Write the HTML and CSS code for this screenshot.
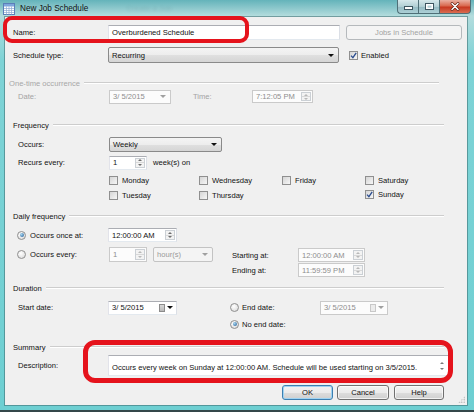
FILE: index.html
```html
<!DOCTYPE html>
<html>
<head>
<meta charset="utf-8">
<title>New Job Schedule</title>
<link rel="stylesheet" href="styles.css">
</head>
<body>
<div class="window">
  <div class="titlebar">
    <svg class="app-icon" viewBox="0 0 12 12" width="12" height="12">
      <rect x="0.5" y="0.5" width="11" height="11" fill="#fff" stroke="#5b7fb8"/>
      <rect x="1" y="1" width="10" height="2.5" fill="#7ea6dc"/>
      <path d="M1 5.5h10M1 7.5h10M1 9.5h10M3.5 3.5v8M6 3.5v8M8.5 3.5v8" stroke="#8eaad3" stroke-width="0.7"/>
    </svg>
    <span class="title">New Job Schedule</span>
    <span class="ghost">Create a Job</span>
    <div class="controls">
      <span class="wbtn min"><i></i></span>
      <span class="wbtn max"><i></i></span>
      <span class="wbtn close">
        <svg viewBox="0 0 10 9" width="10" height="9">
          <path d="M2 1.5L8 7.5M8 1.5L2 7.5" stroke="#5a1a10" stroke-width="2.6" stroke-linecap="round"/>
          <path d="M2 1.5L8 7.5M8 1.5L2 7.5" stroke="#fff" stroke-width="1.5" stroke-linecap="round"/>
        </svg>
      </span>
    </div>
  </div>

  <div class="client">
    <div class="row r-name">
      <span class="lbl lbl-top">Name:</span>
      <span class="tb w-name">Overburdened Schedule</span>
      <span class="btn btn-dis w-jobs">Jobs in Schedule</span>
    </div>
    <div class="row r-type">
      <span class="lbl lbl-top">Schedule type:</span>
      <span class="combo w-type">Recurring<i class="arrow"></i></span>
      <span class="chk ml-enabled"><svg viewBox="0 0 7 7"><path d="M1 3.6L2.9 5.6L6.2 0.8" fill="none" stroke="#2b4d8f" stroke-width="1.3"/></svg></span>
      <span class="chk-lbl">Enabled</span>
    </div>

    <div class="gh gh-onetime"><span>One-time occurrence</span><i></i></div>
    <div class="row r-date sub">
      <span class="lbl lbl-sub dis">Date:</span>
      <span class="tb tb-dis w-date">3/&nbsp;5/2015<i class="arrow dis"></i></span>
      <span class="lbl dis lbl-time">Time:</span>
      <span class="tb tb-dis w-time">7:12:05 PM<span class="spin dis"><i class="up"></i><i class="dn"></i></span></span>
    </div>

    <div class="gh gh-freq"><span>Frequency</span><i></i></div>
    <div class="row r-occurs sub">
      <span class="lbl lbl-sub">Occurs:</span>
      <span class="combo w-weekly">Weekly<i class="arrow"></i></span>
    </div>
    <div class="row r-recurs sub">
      <span class="lbl lbl-sub">Recurs every:</span>
      <span class="tb w-spin">1<span class="spin"><i class="up"></i><i class="dn"></i></span></span>
      <span class="weeks">week(s) on</span>
    </div>
    <div class="days">
      <span class="day"><span class="chk"></span>Monday</span>
      <span class="day"><span class="chk"></span>Wednesday</span>
      <span class="day"><span class="chk"></span>Friday</span>
      <span class="day"><span class="chk"></span>Saturday</span>
      <span class="day"><span class="chk"></span>Tuesday</span>
      <span class="day"><span class="chk"></span>Thursday</span>
      <span class="day"></span>
      <span class="day day-sun"><span class="chk"><svg viewBox="0 0 7 7"><path d="M1 3.6L2.9 5.6L6.2 0.8" fill="none" stroke="#2b4d8f" stroke-width="1.3"/></svg></span>Sunday</span>
    </div>

    <div class="gh gh-daily"><span>Daily frequency</span><i></i></div>
    <div class="daily">
      <div class="daily-left">
        <div class="row r-once">
          <span class="radio on"></span><span class="rlbl">Occurs once at:</span>
          <span class="tb w-t1">12:00:00 AM<span class="spin"><i class="up"></i><i class="dn"></i></span></span>
        </div>
        <div class="row r-every">
          <span class="radio"></span><span class="rlbl">Occurs every:</span>
          <span class="tb tb-dis w-spin2">1<span class="spin dis"><i class="up"></i><i class="dn"></i></span></span>
          <span class="combo combo-dis w-hours">hour(s)<i class="arrow dis"></i></span>
        </div>
      </div>
      <div class="daily-right">
        <div class="row r-start">
          <span class="lbl lbl-se">Starting at:</span>
          <span class="tb tb-dis w-t2">12:00:00 AM<span class="spin dis"><i class="up"></i><i class="dn"></i></span></span>
        </div>
        <div class="row r-end">
          <span class="lbl lbl-se">Ending at:</span>
          <span class="tb tb-dis w-t2">11:59:59 PM<span class="spin dis"><i class="up"></i><i class="dn"></i></span></span>
        </div>
      </div>
    </div>

    <div class="gh gh-dur"><span>Duration</span><i></i></div>
    <div class="dur">
      <div class="dur-left">
        <div class="row r-sdate">
          <span class="lbl lbl-sd">Start date:</span>
          <span class="tb w-sdate">3/&nbsp;5/2015<span class="cal"></span><i class="arrow arrow-cal"></i></span>
        </div>
      </div>
      <div class="dur-right">
        <div class="row r-edate">
          <span class="radio"></span><span class="rlbl2">End date:</span>
          <span class="tb tb-dis w-edate">3/&nbsp;5/2015<span class="cal dis"></span><i class="arrow arrow-cal dis"></i></span>
        </div>
        <div class="row r-noend">
          <span class="radio on"></span><span class="rlbl2">No end date:</span>
        </div>
      </div>
    </div>

    <div class="gh gh-sum"><span>Summary</span><i></i></div>
    <div class="row r-desc">
      <span class="lbl lbl-sd lbl-desc">Description:</span>
      <span class="tb w-desc"><span class="desc-text">Occurs every week on Sunday at 12:00:00 AM. Schedule will be used starting on 3/5/2015.</span><span class="vscroll"><i class="up"></i><i class="dn"></i></span></span>
    </div>

    <div class="row r-btns">
      <span class="btn btn-def w-ok">OK</span>
      <span class="btn w-cancel">Cancel</span>
      <span class="btn w-help">Help</span>
    </div>
    <span class="grip"></span>
  </div>

  <span class="hl hl-name"></span>
  <span class="hl hl-desc"></span>
</div>
</body>
</html>
```

FILE: styles.css
```css
* { box-sizing: border-box; }
html, body { margin: 0; padding: 0; }
body {
  width: 474px; height: 412px; overflow: hidden;
  background: #6fcfd2;
  font-family: "Liberation Sans", Arial, sans-serif;
  font-size: 7.6px; color: #111;
}
.window {
  position: relative; width: 474px; height: 412px;
  display: flex; flex-direction: column;
  background: linear-gradient(to bottom, #64b3ba 0, #b3dcdd 16px, #7ed3d6 60px, #6dcfd2 100%);
  border-bottom: 2px solid #34474a;
}

/* title bar */
.titlebar { height: 17px; flex: none; display: flex; align-items: center; padding-left: 3px; }
.app-icon { width: 12px; height: 12px; flex: none; }
.title { margin-left: 5px; font-size: 8.2px; color: #111; }
.ghost { margin-left: 38px; font-size: 8px; color: rgba(40, 70, 75, 0.1); filter: blur(0.8px); }
.controls { margin-left: auto; margin-right: 3px; align-self: flex-start; display: flex; height: 14px; }
.wbtn { height: 14px; display: flex; align-items: center; justify-content: center; border: 1px solid #4f6f77; border-top: none; }
.min, .max { background: linear-gradient(#d6e8eb, #b1cfd4 50%, #93b9c1 51%, #acd0d6); }
.min { width: 21px; border-right: none; border-radius: 0 0 0 4px; }
.max { width: 22px; }
.close { width: 31px; border-left: none; border-radius: 0 0 4px 0; background: linear-gradient(#eab0a2, #d9694f 45%, #c73820 55%, #d96d52); }
.min i { width: 9px; height: 4px; margin-top: 3px; background: #fff; border: 1px solid #3d5560; }
.max i { width: 9px; height: 7px; border: 1px solid #3d5560; box-shadow: inset 0 0 0 1.5px #fff; }

/* client */
.client {
  position: relative; flex: none; height: 388px; margin: 0 7px 0 5px;
  background: #f0f0f0; box-shadow: 0 0 0 1px rgba(60, 105, 110, 0.55);
  padding-left: 8px; display: flex; flex-direction: column;
}
.row { display: flex; align-items: center; flex: none; white-space: nowrap; }
.lbl { flex: none; }
.dis { color: #a3a3a3; }
.sub { padding-left: 5px; }

.r-name { margin-top: 7px; height: 16px; }
.r-type { margin-top: 7px; height: 16px; }
.lbl-top { width: 95px; }
.w-name { width: 232px; height: 15px; }
.w-jobs { width: 116px; height: 14px; margin-left: 6px; }
.w-type { width: 231px; height: 16px; }
.ml-enabled { margin-left: 10px; }
.chk-lbl { margin-left: 3px; }

/* group headings */
.gh { display: flex; align-items: center; height: 12px; flex: none; width: 431px; }
.gh i { flex: 1; height: 2px; border-top: 1px solid #cdcdcd; border-bottom: 1px solid #fff; margin-left: 4px; }
.gh-onetime { margin-top: 14px; margin-left: -4px; width: 430px; color: #a7a7a7; }
.gh-freq { margin-top: 15px; }
.gh-daily { margin-top: 7px; }
.gh-dur { margin-top: 5px; }
.gh-sum { margin-top: 10px; }

.r-date { height: 15px; }
.lbl-sub { width: 91px; }
.w-date { width: 62px; height: 14px; padding-left: 6px; }
.lbl-time { margin-left: 22px; width: 59px; }
.w-time { width: 61px; height: 13px; padding-left: 6px; }

.r-occurs { margin-top: 6px; height: 15px; }
.w-weekly { width: 113px; height: 15px; }
.r-recurs { margin-top: 3px; height: 15px; }
.w-spin { width: 38px; height: 14px; }
.weeks { margin-left: 6px; }

.days {
  margin-top: 3px; margin-left: 96px; flex: none;
  display: grid; grid-template-columns: 90px 83px 83px auto; grid-template-rows: 15px 15px;
}
.day { display: flex; align-items: center; }
.day .chk { margin-right: 4px; }
.day-sun { margin-top: -2px; }

.daily { margin-top: 6px; display: flex; flex: none; }
.daily-left { margin-left: 4px; width: 215px; display: flex; flex-direction: column; }
.r-once { height: 14px; }
.r-every { margin-top: 5px; height: 15px; }
.rlbl { width: 78px; margin-left: 4px; }
.w-t1 { width: 69px; height: 14px; }
.w-spin2 { width: 38px; height: 15px; margin-left: 1px; }
.w-hours { width: 60px; height: 15px; margin-left: 6px; }
.daily-right { display: flex; flex-direction: column; }
.r-start { margin-top: 20px; height: 14px; }
.r-end { margin-top: 1px; height: 14px; }
.lbl-se { width: 66px; }
.w-t2 { width: 67px; height: 14px; }

.dur { margin-top: 6px; display: flex; flex: none; }
.dur-left { margin-left: 5px; width: 212px; }
.r-sdate { height: 15px; }
.lbl-sd { width: 90px; }
.w-sdate { width: 69px; height: 14px; padding-left: 7px; }
.dur-right { display: flex; flex-direction: column; }
.r-edate { height: 15px; }
.r-noend { margin-top: 2px; height: 14px; }
.rlbl2 { margin-left: 3px; width: 78px; }
.w-edate { width: 68px; height: 14px; padding-left: 9px; }

.r-desc { margin-top: 2px; height: 21px; padding-left: 5px; }
.lbl-desc { align-self: center; }
.w-desc { width: 341px; height: 21px; padding-left: 4px; align-items: flex-start; }
.desc-text { padding-top: 4px; }
.vscroll { margin-left: auto; margin-right: 4px; height: 100%; display: flex; flex-direction: column; justify-content: center; gap: 4px; }
.vscroll i { display: block; width: 0; height: 0; border-left: 2px solid transparent; border-right: 2px solid transparent; }
.vscroll .up { border-bottom: 2px solid #7a7a7a; }
.vscroll .dn { border-top: 2px solid #7a7a7a; }

.r-btns { margin-top: 9px; height: 15px; padding-left: 269px; }
.w-ok { width: 51px; }
.w-cancel { width: 52px; margin-left: 4px; }
.w-help { width: 50px; margin-left: 5px; }

/* controls */
.tb {
  display: flex; align-items: center; flex: none; white-space: nowrap;
  background: #fff; border: 1px solid; border-color: #abadb3 #dbdfe6 #e3e9ef #e2e3ea;
  padding-left: 3px;
}
.tb-dis { background: #fcfcfc; border-color: #cacaca; color: #8d8d8d; }

.spin {
  margin-left: auto; margin-right: 1px; width: 10px; height: calc(100% - 2px);
  display: flex; flex-direction: column; border: 1px solid #cbd0d5; background: #f3f3f3;
}
.spin i { flex: 1; display: flex; align-items: center; justify-content: center; }
.spin .up { border-bottom: 1px solid #d8d8d8; }
.spin i::after { content: ""; border-left: 2px solid transparent; border-right: 2px solid transparent; }
.spin .up::after { border-bottom: 2px solid #6e6e6e; }
.spin .dn::after { border-top: 2px solid #6e6e6e; }
.spin.dis .up::after { border-bottom-color: #b8b8b8; }
.spin.dis .dn::after { border-top-color: #b8b8b8; }

.combo {
  display: flex; align-items: center; flex: none; padding-left: 3px;
  border: 1px solid #8a8a8a; border-radius: 2px;
  background: linear-gradient(#f4f4f4 0, #ededed 50%, #e0e0e0 51%, #d5d5d5 100%);
}
.combo-dis { background: #f4f4f4; border-color: #c3c3c3; color: #9a9a9a; }
.arrow {
  margin-left: auto; margin-right: 4px; width: 0; height: 0;
  border-left: 3px solid transparent; border-right: 3px solid transparent; border-top: 3px solid #111;
}
.arrow.dis { border-top-color: #a0a0a0; }
.arrow-cal { margin-left: 2px; margin-right: 3px; }
.cal { margin-left: auto; width: 6px; height: 8px; border: 1px solid #8c8c8c; background: linear-gradient(#d8d8d8, #b9b9b9); }
.cal.dis { border-color: #c8c8c8; background: #ececec; }

.chk {
  width: 9px; height: 9px; flex: none; border: 1px solid #8f8f8f;
  background: linear-gradient(135deg, #d5d5d5, #f6f6f6);
  display: inline-flex; align-items: center; justify-content: center;
}
.chk svg { width: 7px; height: 7px; }
.radio {
  width: 9px; height: 9px; flex: none; border-radius: 50%; border: 1px solid #8f8f8f;
  background: radial-gradient(circle at 40% 35%, #fff, #d6d6d6);
  display: flex; align-items: center; justify-content: center;
}
.radio.on::after { content: ""; width: 4px; height: 4px; border-radius: 50%; background: radial-gradient(circle at 35% 35%, #a6d6f2, #1d5790); }

.btn {
  display: flex; align-items: center; justify-content: center; flex: none; height: 15px;
  border: 1px solid #707070; border-radius: 3px;
  background: linear-gradient(#f3f3f3 0, #ebebeb 50%, #dddddd 51%, #cfcfcf 100%);
  box-shadow: inset 0 0 0 1px rgba(255, 255, 255, 0.7);
}
.btn-def { border-color: #3c7fb1; box-shadow: inset 0 0 0 1px #9fd3f2; }
.btn-dis { background: #f4f4f4; border-color: #b5b9bc; color: #a3a3a3; box-shadow: none; }

.grip {
  position: absolute; right: 2px; bottom: 2px; width: 7px; height: 7px;
  background: radial-gradient(circle, #a9a9a9 0.7px, transparent 0.9px) 0 0 / 2.5px 2.5px;
  clip-path: polygon(100% 0, 100% 100%, 0 100%);
}

/* highlight overlays */
.hl { position: absolute; border: 4px solid #e5131c; pointer-events: none; }
.hl-name { left: 3px; top: 16px; width: 246px; height: 27px; border-radius: 9px; }
.hl-desc { left: 83px; top: 340px; width: 370px; height: 43px; border-width: 5px; border-radius: 12px; }
```
